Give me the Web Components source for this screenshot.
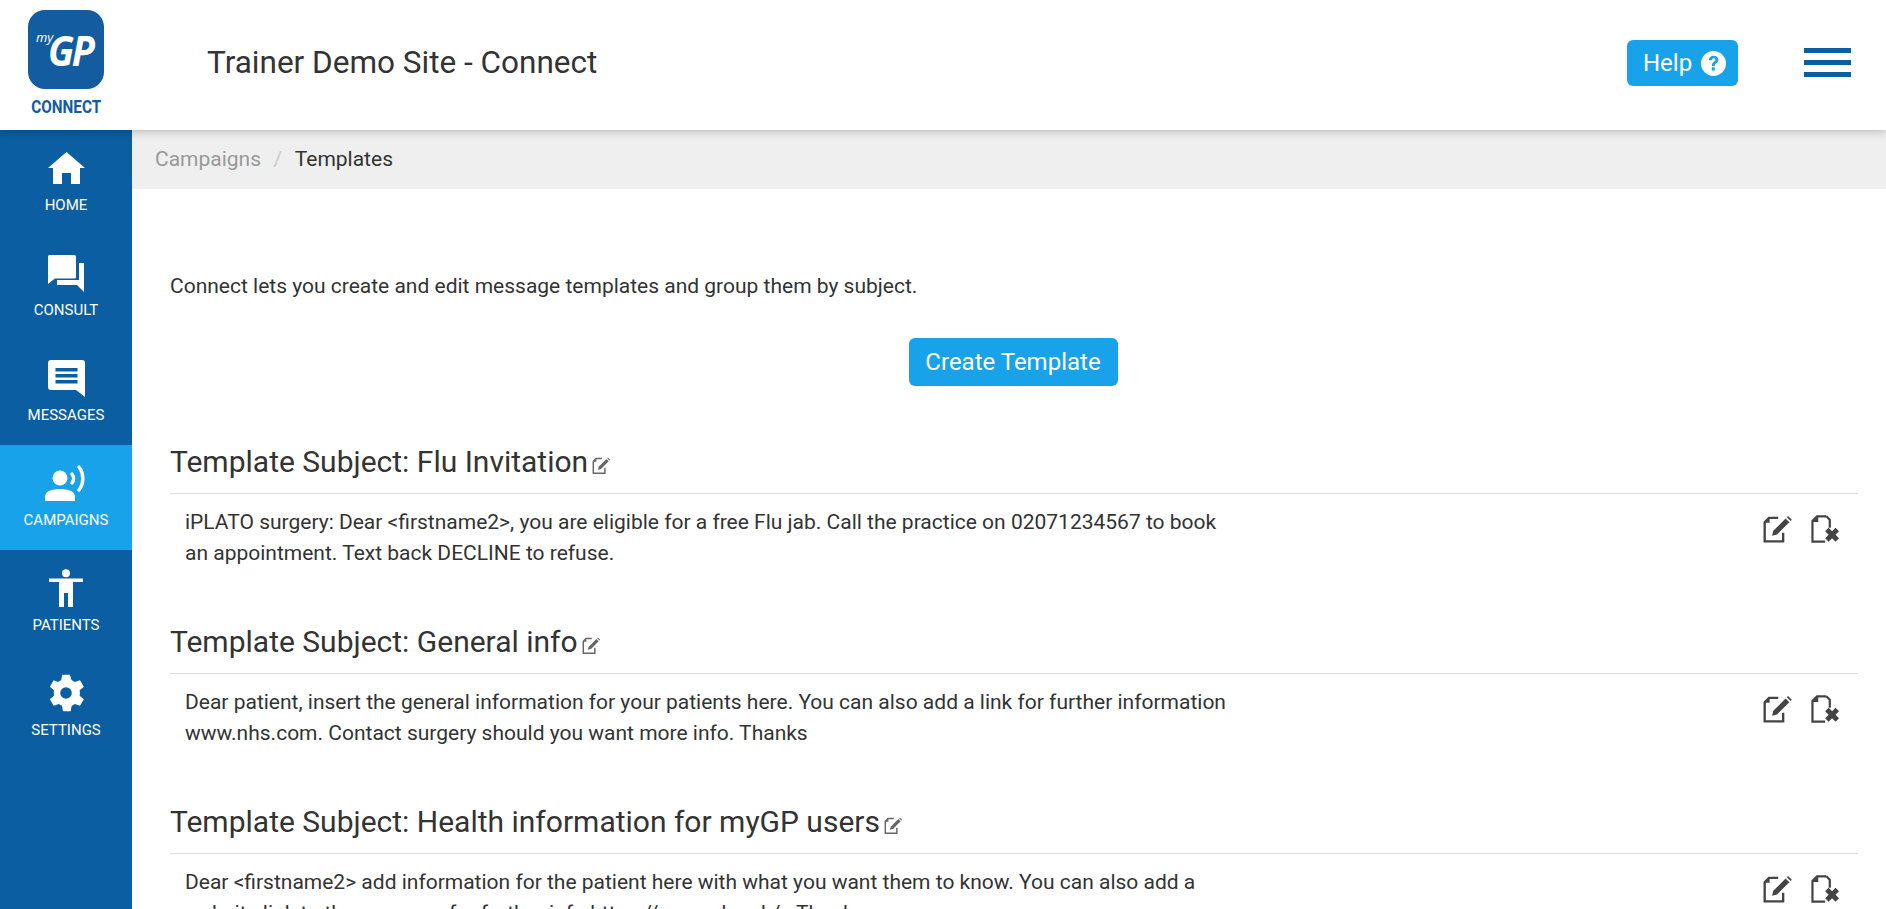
<!DOCTYPE html>
<html lang="en"><head><meta charset="utf-8"><title>Templates</title>
<style>
html,body{margin:0;padding:0;height:909px;overflow:hidden;background:#fff;font-family:Roboto,"Liberation Sans",sans-serif;color:#333}
</style></head><body>
<app-shell>
<app-header slot="header"></app-header>
<side-nav slot="nav"></side-nav>
<bread-crumb></bread-crumb>
<main-panel>
<p class="intro" slot="intro">Connect lets you create and edit message templates and group them by subject.</p>
<template-group subject="Flu Invitation">iPLATO surgery: Dear &lt;firstname2&gt;, you are eligible for a free Flu jab. Call the practice on 02071234567 to book an appointment. Text back DECLINE to refuse.</template-group>
<template-group subject="General info">Dear patient, insert the general information for your patients here. You can also add a link for further information www.nhs.com. Contact surgery should you want more info. Thanks</template-group>
<template-group subject="Health information for myGP users">Dear &lt;firstname2&gt; add information for the patient here with what you want them to know. You can also add a website link to the page you for further info https://www.nhs.uk/ . Thanks</template-group>
</main-panel>
</app-shell>
<script>
const def=(n,html)=>customElements.define(n,class extends HTMLElement{connectedCallback(){if(this.shadowRoot)return;const s=this.attachShadow({mode:'open'});s.innerHTML=typeof html==='function'?html(this):html;}});
const editPaths=`<path d="M14 3H6.500L3 6.500V22h15v-7" fill="none" stroke="currentColor" stroke-width="1.900"/><path d="M3 7h4V3z" fill="currentColor"/><path d="M10 13.500 20 3.500l3 3-10 10-4 1z" fill="currentColor"/><path d="M21 2.500l1-1 3 3-1 1z" fill="currentColor"/>`;
def('app-shell',`<style>
:host{display:grid;grid-template-columns:132px 1fr;grid-template-rows:130px 779px;width:1886px;height:909px;overflow:hidden}
::slotted([slot=header]){grid-column:1/3;grid-row:1}
::slotted([slot=nav]){grid-column:1;grid-row:2}
.c{grid-column:2;grid-row:2;min-width:0;display:flex;flex-direction:column;overflow:hidden}
</style><slot name="header"></slot><slot name="nav"></slot><div class="c"><slot></slot></div>`);
def('app-header',`<style>
:host{display:flex;align-items:center;height:130px;background:#fff;box-shadow:0 2px 8px rgba(0,0,0,.22);position:relative;z-index:2}
.logo{width:132px;display:flex;flex-direction:column;align-items:center;padding-top:10px;box-sizing:border-box;height:130px}
.mark{width:76px;height:79px;border-radius:17px;background:#135ca0;position:relative;color:#fff;font-style:italic;font-family:"Open Sans",Roboto,sans-serif;flex:none}
.my{position:absolute;left:8px;top:20px;font-size:13px;line-height:14px;font-weight:400}
.gp{position:absolute;left:20px;top:15px;font-size:42px;line-height:50px;font-weight:700;letter-spacing:-2.500px;transform:scaleX(.9);transform-origin:0 50%}
.con{font-size:18px;line-height:20px;font-weight:700;color:#135ca0;margin-top:8px;transform:scaleX(.85);white-space:nowrap}
h1{margin:0 0 0 75px;font-size:31.500px;line-height:36px;font-weight:400;color:#333;flex:1;position:relative;top:-2px}
.help{display:flex;align-items:center;width:111px;height:46px;box-sizing:border-box;padding-left:16px;background:#17a2ea;border-radius:6px;color:#fff;font-size:24px;gap:9px;position:relative;top:-2px}
.burger{width:47px;margin:0 35px 0 66px;display:flex;flex-direction:column;gap:7px;position:relative;top:-3px}
.burger i{display:block;height:5px;background:#0b5ea2}
</style>
<div class="logo"><div class="mark"><span class="my">my</span><span class="gp">GP</span></div><div class="con">CONNECT</div></div>
<h1>Trainer Demo Site - Connect</h1>
<div class="help">Help<svg width="25" height="25" viewBox="0 0 25 25"><circle cx="12.500" cy="12.500" r="12.500" fill="#fff"/><path d="M7.800 9.300c.2-2.800 2.200-4.500 4.900-4.500 2.800 0 4.700 1.700 4.700 4 0 1.800-1 2.700-2.200 3.600-1.100.8-1.400 1.300-1.400 2.500h-2.900c0-2.100.5-3 1.900-4 1.100-.8 1.600-1.300 1.600-2.100 0-.9-.7-1.500-1.700-1.500-1.100 0-1.800.7-1.900 2z" fill="#17a2ea"/><rect x="10.800" y="16.300" width="3" height="3.200" fill="#17a2ea"/></svg></div>
<div class="burger"><i></i><i></i><i></i></div>`);
def('nav-item',h=>`<style>
:host{display:flex;flex-direction:column;align-items:center;height:105px;box-sizing:border-box;padding-top:19px;color:#fff;font-size:15px;line-height:16px;background:${h.hasAttribute('active')?'#17a2ea':'transparent'}}
.i{height:38px;display:flex;align-items:center;justify-content:center;margin-bottom:10px}
</style><div class="i"><slot name="icon"></slot></div><slot></slot>`);
def('side-nav',`<style>
:host{display:block;background:#0b5ea2;height:779px}
</style>
<nav-item><svg slot="icon" width="37" height="32" viewBox="0 0 37 32" style="display:block"><path fill-rule="evenodd" d="M18.500 0 37 16H32V32H23V21H14V32H5V16H0z" fill="#fff"/></svg>HOME</nav-item>
<nav-item><svg slot="icon" width="37" height="37" viewBox="0 0 37 37" style="display:block"><path d="M1.500 0h25A1.500 1.500 0 0 1 28 1.500V22a1.500 1.500 0 0 1-1.500 1.500H7L0 29V1.500A1.500 1.500 0 0 1 1.500 0z" fill="#fff"/><path d="M31 8h5v29l-7-7H9v-5h22z" fill="#fff"/></svg>CONSULT</nav-item>
<nav-item><svg slot="icon" width="37" height="37" viewBox="0 0 37 37" style="display:block"><path d="M3 0h31a3 3 0 0 1 3 3v34l-9-7H3a3 3 0 0 1-3-3V3a3 3 0 0 1 3-3z" fill="#fff"/><path d="M7.500 8h22v3.500h-22zM7.500 14h22v3.500h-22zM7.500 20h22v3.500h-22z" fill="#0b5ea2"/></svg>MESSAGES</nav-item>
<nav-item active><svg slot="icon" width="42" height="36" viewBox="0 0 42 36" style="display:block"><circle cx="15" cy="13" r="7.500" fill="#fff"/><path d="M0 36v-4c0-6 7-8 15-8s15 2 15 8v4z" fill="#fff"/><path d="M27 9c2 2.500 2 6.500 0 9" fill="none" stroke="#fff" stroke-width="3.500" stroke-linecap="round"/><path d="M34 2c5 6 5 17 0 23" fill="none" stroke="#fff" stroke-width="3.500" stroke-linecap="round"/></svg>CAMPAIGNS</nav-item>
<nav-item><svg slot="icon" width="34" height="38" viewBox="0 0 34 38" style="display:block"><circle cx="17" cy="4.200" r="4" fill="#fff"/><path d="M0 9.500h34V13H24v25h-5V24h-4v14h-5V13H0z" fill="#fff"/></svg>PATIENTS</nav-item>
<nav-item><svg slot="icon" width="40" height="40" viewBox="0 0 24 24" style="display:block"><path fill="#fff" fill-rule="evenodd" d="M14.300 0h-4.600l-.6 3.300c-.7.300-1.300.7-1.900 1.100L4.600 3.300 2.300 7.300l2.500 2.100a9 9 0 0 0 0 3.200l-2.500 2.100 2.300 4 3.100-1.100c.6.400 1.200.8 1.900 1.100l.6 3.300h4.600l.6-3.300c.7-.3 1.300-.7 1.900-1.100l3.100 1.100 2.300-4-2.500-2.100a9 9 0 0 0 0-3.200l2.500-2.100-2.300-4-3.100 1.100c-.6-.4-1.200-.8-1.900-1.100zM12 7.500a3.500 3.500 0 1 1 0 7 3.500 3.500 0 0 1 0-7z" transform="translate(0 1)"/></svg>SETTINGS</nav-item>`);
def('bread-crumb',`<style>
:host{display:flex;align-items:center;height:59px;flex:none;background:#efefef;padding:0 0 2px 23px;box-sizing:border-box;font-size:21px;color:#999}
.s{color:#ccc;margin:0 12.500px}
.a{color:#333}
</style><span>Campaigns</span><span class="s">/</span><span class="a">Templates</span>`);
def('main-panel',`<style>
:host{display:block;padding:83px 28px 0 38px;font-size:21px}
::slotted(.intro){margin:0;line-height:28px;font-size:21px;color:#333}
.b{display:flex;justify-content:center;margin-top:38px;margin-bottom:51px}
.btn{width:209px;height:48px;border-radius:6px;background:#17a2ea;color:#fff;font-size:24px;display:flex;align-items:center;justify-content:center;box-sizing:border-box;margin-right:2px}
</style><slot name="intro"></slot><div class="b"><div class="btn">Create Template</div></div><slot></slot>`);
def('template-group',h=>`<style>
:host{display:block;height:180px}
h2{margin:0;font-size:30px;line-height:36px;font-weight:400;color:#333;display:flex;align-items:center;height:48px;padding:1px 0 7px;box-sizing:content-box}
h2 svg{margin:6px 0 0 3px;color:#666}
.row{border-top:1px solid #ddd;display:flex;justify-content:space-between;padding:13px 0 0 15px}
.t{width:1050px;font-size:21px;line-height:31px;color:#333}
.ic{display:flex;gap:16px;padding:7px 19px 0 0;color:#444}
</style><h2>Template Subject: ${h.getAttribute('subject')}<svg width="20" height="19" viewBox="0 0 26 24">${editPaths}</svg></h2>
<div class="row"><div class="t"><slot></slot></div><div class="ic"><svg width="32" height="30" viewBox="0 0 26 24">${editPaths}</svg><svg width="30" height="30" viewBox="0 0 26 26"><path d="M15 2H7L3 6v18h11" fill="none" stroke="currentColor" stroke-width="1.900"/><path d="M3 7h5V2z" fill="currentColor"/><path d="M15 2l3 3v7" fill="none" stroke="currentColor" stroke-width="1.900"/><path d="M14 15l3-3 3 3 3-3 3 3-3 3 3 3-3 3-3-3-3 3-3-3 3-3z" fill="currentColor"/></svg></div></div>`);
</script>
</body></html>
